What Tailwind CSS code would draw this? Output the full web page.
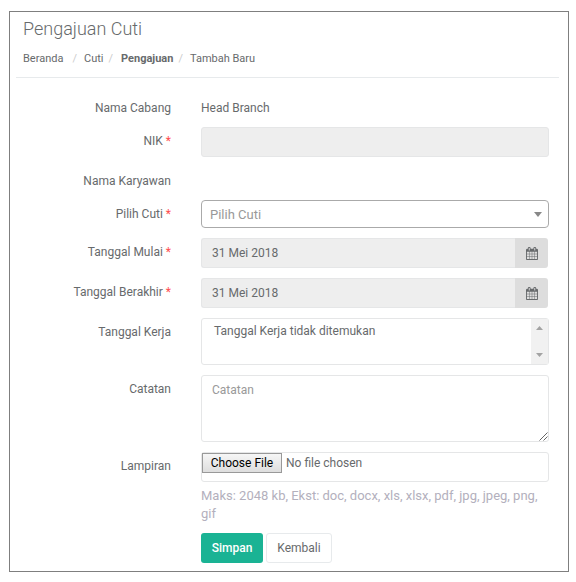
<!DOCTYPE html>
<html lang="id">
<head>
    <meta charset="UTF-8">
    <meta name="viewport" content="width=device-width, initial-scale=1">
    <title>Pengajuan Cuti</title>
    <script src="https://cdn.jsdelivr.net/npm/@tailwindcss/browser@4"></script>
</head>
<body class="bg-white font-[Roboto,sans-serif] text-[12px] leading-[18px] text-[#676a6c]">

    <div class="ml-[9px] mt-[11px] w-[560px] h-[561px] border border-[#7f7f7f]">

        <!-- Header -->
        <div class="ml-[6px] mr-[9px] px-[7px] h-[66px] border-b border-[#e7eaec]">
            <h2 class="pt-[5px] text-[18px] leading-6 font-light">Pengajuan Cuti</h2>
            <ol class="flex pt-[9px] text-[11px]">
                <li>Beranda</li>
                <li class="pl-[9px]"><span class="text-[#ccc] pr-[7px]">/</span>Cuti</li>
                <li class="pl-[5px]"><span class="text-[#ccc] pr-[8px]">/</span><b class="font-bold">Pengajuan</b></li>
                <li class="pl-[5px]"><span class="text-[#ccc] pr-[7px]">/</span>Tambah Baru</li>
            </ol>
        </div>

        <!-- Form -->
        <form class="pt-[21px]">
            <div class="flex gap-[30px] h-[28px]">
                <label class="w-[161px] text-right">Nama Cabang</label>
                <p>Head Branch</p>
            </div>

            <div class="flex gap-[30px] mb-[15px]">
                <label class="w-[161px] pt-[5px] text-right">NIK <span class="text-[#ff4d4d]">*</span></label>
                <div class="w-[348px] h-[30px] rounded-[3px] border border-[#e5e6e7] bg-[#eee]"></div>
            </div>

            <div class="flex gap-[30px] h-[28px]">
                <label class="w-[161px] text-right">Nama Karyawan</label>
            </div>

            <div class="flex gap-[30px] mb-[10px]">
                <label class="w-[161px] pt-[5px] text-right">Pilih Cuti <span class="text-[#ff4d4d]">*</span></label>
                <div class="flex items-center justify-between w-[348px] h-[28px] pl-[8px] pr-[6px] rounded-[4px] border border-[#aaa] text-[13px] text-[#999]">
                    <span class="pt-px">Pilih Cuti</span>
                    <svg class="w-[8px] h-[5px]" viewBox="0 0 8 5" fill="#888"><path d="M0 0h8L4 5z"/></svg>
                </div>
            </div>

            <div class="flex gap-[30px] mb-[10px]">
                <label class="w-[161px] pt-[5px] text-right">Tanggal Mulai <span class="text-[#ff4d4d]">*</span></label>
                <div class="flex w-[347px] h-[30px]">
                    <div class="flex-1 pl-[10px] pt-[5px] rounded-l-[3px] border border-r-0 border-[#e5e6e7] bg-[#eee]">31 Mei 2018</div>
                    <div class="flex items-center justify-center w-[33px] rounded-r-[3px] bg-[#ddd]">
                        <svg class="w-[12px] h-[13px]" viewBox="0 0 1664 1792" preserveAspectRatio="none" fill="#676a6c"><path d="M128 1664h288v-288h-288v288zm352 0h320v-288h-320v288zm-352-352h288v-320h-288v320zm352 0h320v-320h-320v320zm-352-384h288v-288h-288v288zm736 736h320v-288h-320v288zm-384-736h320v-288h-320v288zm768 736h288v-288h-288v288zm-384-352h320v-320h-320v320zm-352-864v-288q0-13-9.500-22.500t-22.500-9.500h-64q-13 0-22.500 9.500t-9.500 22.500v288q0 13 9.500 22.500t22.500 9.500h64q13 0 22.500-9.500t9.500-22.500zm736 864h288v-320h-288v320zm-384-384h320v-288h-320v288zm384 0h288v-288h-288v288zm32-480v-288q0-13-9.500-22.500t-22.500-9.500h-64q-13 0-22.500 9.500t-9.500 22.500v288q0 13 9.500 22.500t22.500 9.500h64q13 0 22.500-9.500t9.500-22.500zm384-64v1280q0 52-38 90t-90 38h-1408q-52 0-90-38t-38-90v-1280q0-52 38-90t90-38h128v-96q0-66 47-113t113-47h64q66 0 113 47t47 113v96h384v-96q0-66 47-113t113-47h64q66 0 113 47t47 113v96h128q52 0 90 38t38 90z"/></svg>
                    </div>
                </div>
            </div>

            <div class="flex gap-[30px] mb-[10px]">
                <label class="w-[161px] pt-[5px] text-right">Tanggal Berakhir <span class="text-[#ff4d4d]">*</span></label>
                <div class="flex w-[347px] h-[30px]">
                    <div class="flex-1 pl-[10px] pt-[5px] rounded-l-[3px] border border-r-0 border-[#e5e6e7] bg-[#eee]">31 Mei 2018</div>
                    <div class="flex items-center justify-center w-[33px] rounded-r-[3px] bg-[#ddd]">
                        <svg class="w-[12px] h-[13px]" viewBox="0 0 1664 1792" preserveAspectRatio="none" fill="#676a6c"><path d="M128 1664h288v-288h-288v288zm352 0h320v-288h-320v288zm-352-352h288v-320h-288v320zm352 0h320v-320h-320v320zm-352-384h288v-288h-288v288zm736 736h320v-288h-320v288zm-384-736h320v-288h-320v288zm768 736h288v-288h-288v288zm-384-352h320v-320h-320v320zm-352-864v-288q0-13-9.500-22.500t-22.500-9.500h-64q-13 0-22.500 9.500t-9.500 22.500v288q0 13 9.500 22.500t22.500 9.500h64q13 0 22.500-9.500t9.500-22.500zm736 864h288v-320h-288v320zm-384-384h320v-288h-320v288zm384 0h288v-288h-288v288zm32-480v-288q0-13-9.500-22.500t-22.500-9.500h-64q-13 0-22.500 9.500t-9.500 22.500v288q0 13 9.500 22.500t22.500 9.500h64q13 0 22.500-9.500t9.500-22.500zm384-64v1280q0 52-38 90t-90 38h-1408q-52 0-90-38t-38-90v-1280q0-52 38-90t90-38h128v-96q0-66 47-113t113-47h64q66 0 113 47t47 113v96h384v-96q0-66 47-113t113-47h64q66 0 113 47t47 113v96h128q52 0 90 38t38 90z"/></svg>
                    </div>
                </div>
            </div>

            <div class="flex gap-[30px] mb-[10px]">
                <label class="w-[161px] pt-[5px] text-right">Tanggal Kerja</label>
                <div class="flex justify-between w-[348px] h-[47px] rounded-[3px] border border-[#e5e6e7]">
                    <span class="pl-[12px] pt-[3px]">Tanggal Kerja tidak ditemukan</span>
                    <div class="flex flex-col items-center justify-between w-[17px] py-[7px] bg-[#f1f1f1]">
                        <svg class="w-[7px] h-[4px]" viewBox="0 0 7 4" fill="#a3a3a3"><path d="M0 4h7L3.500 0z"/></svg>
                        <svg class="w-[7px] h-[4px]" viewBox="0 0 7 4" fill="#a3a3a3"><path d="M0 0h7L3.500 4z"/></svg>
                    </div>
                </div>
            </div>

            <div class="flex gap-[30px] mb-[10px]">
                <label class="w-[161px] pt-[5px] text-right">Catatan</label>
                <div class="relative w-[348px] h-[67px]">
                    <textarea class="block w-full h-full px-[10px] py-[5px] rounded-[3px] border border-[#e5e6e7] resize-none placeholder:text-[#999]" placeholder="Catatan"></textarea>
                    <svg class="absolute right-[1px] bottom-[1px] w-[9px] h-[9px]" viewBox="0 0 9 9" stroke="#555" stroke-width="0.9"><path d="M0.500 8.500l8-8M4.500 8.500l4-4"/></svg>
                </div>
            </div>

            <div class="flex gap-[30px] mb-[5px]">
                <label class="w-[161px] pt-[5px] text-right">Lampiran</label>
                <div class="flex w-[348px] h-[30px] rounded-[3px] border border-[#e5e6e7]">
                    <span class="w-[80px] h-[20px] text-center border border-[#999] bg-linear-to-b from-[#f6f6f6] to-[#dedede] text-black">Choose File</span>
                    <span class="pl-[4px] pt-px">No file chosen</span>
                </div>
            </div>

            <div class="ml-[191px] w-[348px] text-[13px] text-[#b3b0bd]">Maks: 2048 kb, Ekst: doc, docx, xls, xlsx, pdf, jpg, jpeg, png, gif</div>

            <div class="flex gap-[3px] ml-[191px] mt-[10px]">
                <button type="submit" class="w-[62px] h-[30px] rounded-[3px] bg-[#1ab394] text-white font-medium">Simpan</button>
                <button type="button" class="w-[66px] h-[30px] rounded-[3px] border border-[#e7eaec]">Kembali</button>
            </div>
        </form>
    </div>

</body>
</html>
